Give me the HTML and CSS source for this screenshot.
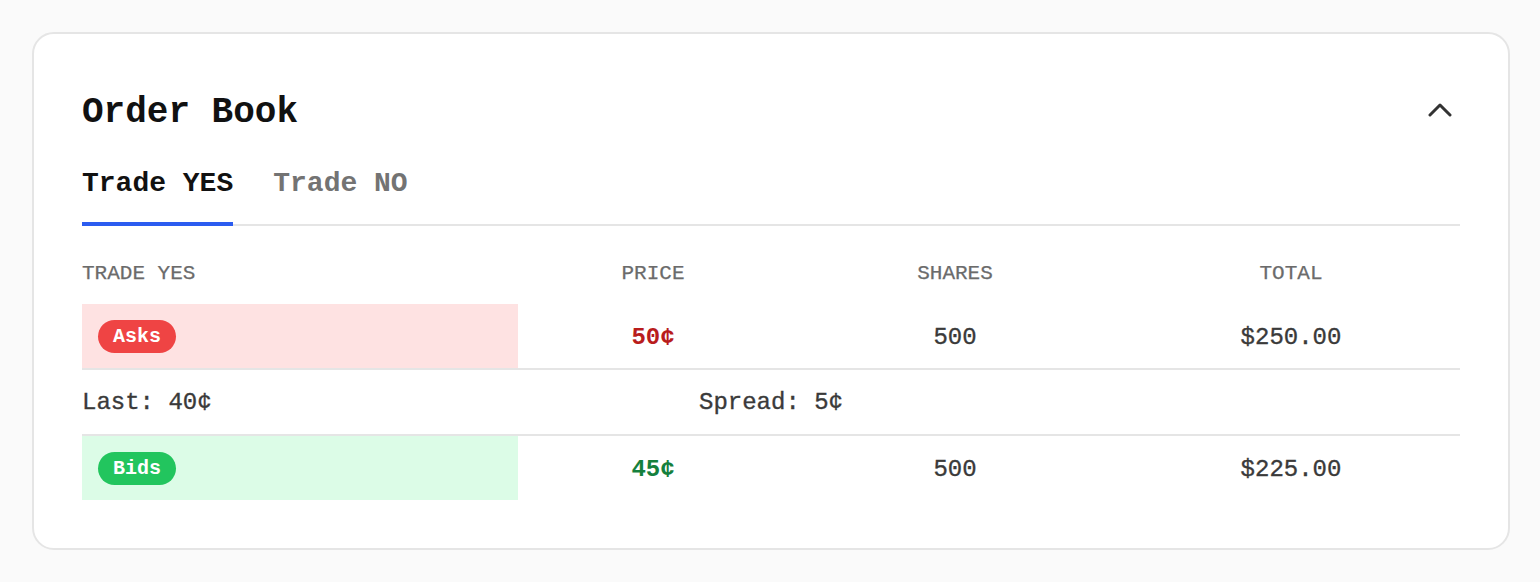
FILE: index.html
```html
<!DOCTYPE html>
<html lang="en">
<head>
<meta charset="utf-8">
<title>Order Book</title>
<link rel="stylesheet" href="styles.css">
</head>
<body>
<section class="card">
  <header class="card-head">
    <h2 class="title">Order Book</h2>
    <button class="collapse" aria-label="Collapse">
      <svg width="24" height="14" viewBox="0 0 24 14" fill="none" stroke="#333" stroke-width="3" stroke-linecap="round" stroke-linejoin="round"><path d="M2 12 L12 2 L22 12"/></svg>
    </button>
  </header>
  <nav class="tabs">
    <span class="tab active">Trade YES</span>
    <span class="tab">Trade NO</span>
  </nav>
  <div class="book">
    <div class="row head">
      <div class="cell left">TRADE YES</div>
      <div class="cell">PRICE</div>
      <div class="cell">SHARES</div>
      <div class="cell">TOTAL</div>
    </div>
    <div class="row data">
      <div class="cell side ask"><span class="badge badge-ask">Asks</span></div>
      <div class="cell price price-ask">50¢</div>
      <div class="cell">500</div>
      <div class="cell">$250.00</div>
    </div>
    <div class="row spread">
      <div class="cell left">Last: 40¢</div>
      <div class="cell">Spread: 5¢</div>
      <div class="cell"></div>
    </div>
    <div class="row data last">
      <div class="cell side bid"><span class="badge badge-bid">Bids</span></div>
      <div class="cell price price-bid">45¢</div>
      <div class="cell">500</div>
      <div class="cell">$225.00</div>
    </div>
  </div>
</section>
</body>
</html>
```

FILE: styles.css
```css
* { box-sizing: border-box; }
html, body { margin: 0; }
body {
  background: #fafafa;
  padding: 32px 30px 32px 32px;
  font-family: "Liberation Mono", "DejaVu Sans Mono", monospace;
  color: #3a3a3a;
}
.card {
  background: #fff;
  border: 2px solid #e5e5e5;
  border-radius: 22px;
  padding: 48px;
}
.card-head {
  display: flex;
  justify-content: space-between;
  align-items: center;
  height: 62px;
}
.title {
  margin: 0;
  font-size: 36px;
  line-height: 62px;
  font-weight: 700;
  color: #111;
}
.collapse {
  background: none;
  border: 0;
  padding: 8px;
  margin-bottom: 6px;
  display: flex;
  cursor: pointer;
}
.tabs {
  margin-top: 24px;
  display: flex;
  gap: 40px;
  border-bottom: 2px solid #e5e5e5;
}
.tab {
  font-size: 28px;
  line-height: 32px;
  font-weight: 700;
  color: #737373;
  padding-bottom: 22px;
  border-bottom: 4px solid transparent;
  margin-bottom: -2px;
}
.tab.active {
  color: #111;
  border-bottom-color: #2b5cf0;
}
.book { margin-top: 24px; }
.row {
  display: grid;
  grid-template-columns: 436fr 270fr 334fr 338fr;
}
.cell {
  text-align: center;
  font-size: 24px;
  line-height: 32px;
  -webkit-text-stroke: 0.35px currentColor;
}
.cell.left { text-align: left; }
.head .cell {
  font-size: 21px;
  line-height: 24px;
  color: #6b6b6b;
  padding: 12px 0 18px;
  -webkit-text-stroke: 0.25px currentColor;
}
.data .cell {
  min-height: 64px;
  padding: 18px 0 14px;
}
.data .cell.side {
  padding: 0 0 0 16px;
  display: flex;
  align-items: center;
  text-align: left;
  -webkit-text-stroke: 0;
}
.ask { background: #fee2e2; }
.bid { background: #dcfce7; }
.data { border-bottom: 2px solid #e5e5e5; }
.data.last { border-bottom: 0; }
.spread {
  grid-template-columns: 1fr auto 1fr;
  border-bottom: 2px solid #e5e5e5;
}
.spread .cell {
  padding: 17px 0 15px;
  height: 64px;
}
.badge {
  display: inline-block;
  height: 33px;
  line-height: 33px;
  padding: 0 15px;
  border-radius: 999px;
  color: #fff;
  font-size: 20px;
  font-weight: 700;
}
.badge-ask { background: #ef4444; }
.badge-bid { background: #22c55e; }
.price { font-weight: 700; -webkit-text-stroke: 0; }
.price-ask { color: #b91c1c; }
.price-bid { color: #15803d; }
```
